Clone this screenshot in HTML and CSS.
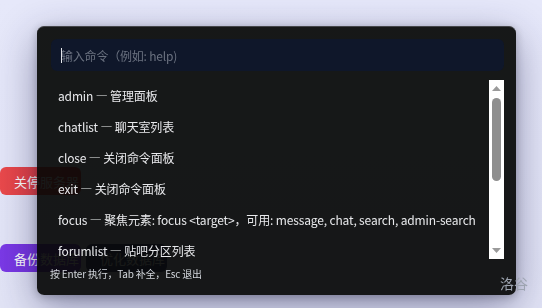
FILE: index.html
```html
<!DOCTYPE html>
<html lang="zh-CN">
<head>
<meta charset="utf-8">
<title>命令面板</title>
<link rel="stylesheet" href="styles.css">
</head>
<body>
<main class="page">
  <div class="actions">
    <div class="row">
      <button class="btn btn-red">关停服务器</button>
    </div>
    <div class="row">
      <button class="btn btn-purple">备份数据库</button>
      <button class="btn btn-dark">优化数据库</button>
    </div>
  </div>
</main>

<div class="palette">
  <div class="input-wrap">
    <input class="palette-input" type="text" placeholder="输入命令（例如: help)">
  </div>
  <div class="list-wrap">
    <ul class="palette-list">
      <li class="item">admin — 管理面板</li>
      <li class="item">chatlist — 聊天室列表</li>
      <li class="item">close — 关闭命令面板</li>
      <li class="item">exit — 关闭命令面板</li>
      <li class="item">focus — 聚焦元素: focus &lt;target&gt;，可用: message, chat, search, admin-search</li>
      <li class="item">forumlist — 贴吧分区列表</li>
      <li class="item">help — 显示帮助</li>
      <li class="item">home — 返回首页</li>
      <li class="item">login — 登录</li>
      <li class="item">logout — 退出登录</li>
    </ul>
    <div class="scrollbar" aria-hidden="true">
      <div class="sb-btn">
        <svg width="9" height="5" viewBox="0 0 9 5"><polygon points="4.5,0 9,5 0,5" fill="#9a9a9a"/></svg>
      </div>
      <div class="sb-track">
        <div class="sb-thumb"></div>
      </div>
      <div class="sb-btn">
        <svg width="9" height="5" viewBox="0 0 9 5"><polygon points="0,0 9,0 4.5,5" fill="#9a9a9a"/></svg>
      </div>
    </div>
  </div>
  <div class="palette-hint">按 Enter 执行，Tab 补全，Esc 退出</div>
</div>

<div class="brand">洛谷</div>
</body>
</html>
```

FILE: styles.css
```css
* { box-sizing: border-box; }

html, body {
  margin: 0;
  height: 100%;
}

body {
  background: linear-gradient(180deg, #e6e8fa 0%, #e2e4f6 100%);
  font-family: "Noto Sans CJK SC", "Noto Sans", sans-serif;
  overflow: hidden;
}

.page {
  padding-top: 167px;
}

.actions {
  display: flex;
  flex-direction: column;
  gap: 49px;
}

.row {
  display: flex;
  gap: 5px;
}

.btn {
  height: 28px;
  width: 81px;
  border: none;
  border-radius: 6px;
  color: #fff;
  font-family: "Noto Sans CJK SC", sans-serif;
  font-size: 13px;
  padding: 0 0 0 14px;
  text-align: left;
}

.btn-red { background: linear-gradient(90deg, #ea4a4c, #dc2f35); }
.btn-purple { background: linear-gradient(90deg, #7b3ae6, #6d28d9); }
.btn-dark { background: #2e3170; }

.palette {
  position: fixed;
  left: 37px;
  top: 26px;
  width: 479px;
  height: 269px;
  padding: 12px 12px 0 14px;
  display: flex;
  flex-direction: column;
  background: rgba(6, 7, 6, 0.93);
  border-top: 1px solid #45464a;
  border-radius: 7px;
  box-shadow: 0 12px 40px rgba(30, 32, 80, 0.45), 0 2px 10px rgba(0, 0, 0, 0.25);
}

.input-wrap {
  position: relative;
  flex: none;
}

.input-wrap::after {
  content: "";
  position: absolute;
  left: 10px;
  top: 9px;
  width: 1px;
  height: 15px;
  background: #e5e7eb;
}

.palette-input {
  display: block;
  height: 32px;
  width: 100%;
  border: none;
  outline: none;
  border-radius: 6px;
  background: #0f172a;
  color: #e5e7eb;
  padding: 0 10px;
  font-family: "Noto Sans CJK SC", sans-serif;
  font-size: 12px;
  letter-spacing: -0.2px;
}

.palette-input::placeholder { color: #6b7280; }

.list-wrap {
  display: flex;
  height: 179px;
  margin-top: 9px;
  flex: none;
}

.palette-list {
  flex: 1;
  min-width: 0;
  list-style: none;
  margin: 0;
  padding: 0;
  overflow: hidden;
}

.scrollbar {
  width: 15px;
  flex: none;
  background: #ffffff;
  display: flex;
  flex-direction: column;
}

.sb-btn {
  height: 17px;
  flex: none;
  display: flex;
  align-items: center;
  justify-content: center;
}

.sb-btn svg { display: block; }

.sb-track {
  flex: 1;
  display: flex;
  justify-content: center;
  padding-top: 1px;
}

.sb-thumb {
  width: 9px;
  height: 83px;
  border-radius: 5px;
  background: #8f8f8f;
}

.item {
  padding: 8px 7px;
  line-height: 15px;
  font-size: 12px;
  letter-spacing: -0.15px;
  color: #e8e9ec;
  white-space: nowrap;
}

.palette-hint {
  margin: 8px 0 0 -1px;
  font-size: 10px;
  line-height: 14px;
  letter-spacing: -0.2px;
  color: #d1d5db;
}

.brand {
  position: fixed;
  right: 14px;
  bottom: 15px;
  font-size: 14px;
  color: #9ca3af;
}
```
